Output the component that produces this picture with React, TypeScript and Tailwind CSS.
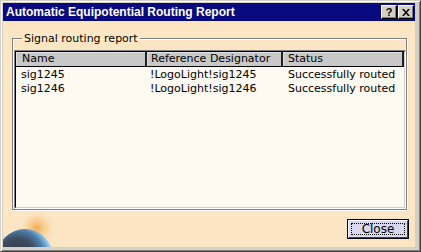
import React from "react";

const body = { fontFamily: '"DejaVu Sans", Verdana, sans-serif' };

function TitleButton({ children }: { children: React.ReactNode }) {
  return (
    <div className="w-[16px] h-[14px] bg-[#d4d0c8] border-t border-l border-white border-r border-b border-r-black border-b-black shadow-[inset_-1px_-1px_0_#808080] flex items-center justify-center">
      {children}
    </div>
  );
}

export default function App() {
  const rows = [
    ["sig1245", "!LogoLight!sig1245", "Successfully routed"],
    ["sig1246", "!LogoLight!sig1246", "Successfully routed"],
  ];
  return (
    <div
      className="w-[421px] h-[252px] bg-[#d4d0c8] border border-[#d4d0c8] border-r-[#404040] border-b-[#404040] shadow-[inset_1px_1px_0_#ffffff,inset_-1px_-1px_0_#808080] pl-[2px] pt-[2px] pr-[5px] pb-[4px] flex flex-col"
      style={body}
    >
      {/* Title bar */}
      <div className="h-[18px] bg-[#0a0a80] flex items-center justify-between pl-[3px] pr-[1px]">
        <span
          className="text-white text-[12px] font-bold leading-none"
          style={{ fontFamily: '"Liberation Sans", Arial, sans-serif' }}
        >
          Automatic Equipotential Routing Report
        </span>
        <div className="flex gap-[1px]">
          <TitleButton>
            <span
              className="text-black text-[11px] font-bold leading-none"
              style={{ fontFamily: '"Liberation Sans", Arial, sans-serif' }}
            >
              ?
            </span>
          </TitleButton>
          <TitleButton>
            <svg width="8" height="7" viewBox="0 0 8 7">
              <path d="M0 0h2l2 2.5L6 0h2L5 3.5 8 7H6L4 4.5 2 7H0l3-3.5z" fill="#000" />
            </svg>
          </TitleButton>
        </div>
      </div>

      {/* Body */}
      <div className="flex-1 bg-[#fbe5c2] relative flex flex-col">
        {/* texture dots */}
        <div className="absolute left-[3px] top-[12px] right-[3px] bottom-[31px] border border-dotted border-[#fff3e0] pointer-events-none" />
        {/* planet decoration */}
        <svg className="absolute left-0 bottom-0" width="60" height="36" viewBox="0 0 60 36">
          <defs>
            <radialGradient id="glow" cx="34" cy="17" r="18" gradientUnits="userSpaceOnUse">
              <stop offset="0" stopColor="#f2a040" stopOpacity="0.85" />
              <stop offset="0.55" stopColor="#f6c078" stopOpacity="0.45" />
              <stop offset="1" stopColor="#fbe5c2" stopOpacity="0" />
            </radialGradient>
            <radialGradient id="planet" cx="14" cy="46" r="34" gradientUnits="userSpaceOnUse">
              <stop offset="0" stopColor="#2e3440" />
              <stop offset="0.55" stopColor="#3e4c60" />
              <stop offset="0.8" stopColor="#4f7ea8" />
              <stop offset="0.95" stopColor="#7cb8e4" />
              <stop offset="1" stopColor="#a0d0f0" />
            </radialGradient>
          </defs>
          <rect x="0" y="0" width="60" height="36" fill="url(#glow)" />
          <circle cx="22" cy="46" r="28" fill="url(#planet)" />
        </svg>

        <fieldset className="relative mt-[11px] ml-[9px] mr-[8px] border border-[#808080] shadow-[inset_1px_1px_0_#ffffff,1px_1px_0_#ffffff] pl-[1px] pr-0 pt-[5px] pb-0 min-w-0">
          <legend className="ml-[8px] px-[2px] text-[11px] leading-[13px] text-black">
            Signal routing report
          </legend>
          <div className="h-[159px] border-t border-l border-[#808080] border-r border-b border-r-white border-b-white">
            <div className="h-full border-t border-l border-black border-r border-b border-r-[#d4d0c8] border-b-[#d4d0c8] bg-[#fef9f1] flex flex-col">
              <div className="grid grid-cols-[131px_136px_1fr] h-[15px] text-[11px] leading-[13px] text-black">
                <div className="bg-[#c8c8c8] border-r-2 border-b border-r-[#202020] border-b-black pl-[6px] shadow-[inset_1px_1px_0_#e0e0e0]">Name</div>
                <div className="bg-[#c8c8c8] border-r-2 border-b border-r-[#202020] border-b-black pl-[4px] shadow-[inset_1px_1px_0_#e0e0e0]">Reference Designator</div>
                <div className="bg-[#c8c8c8] border-r-2 border-b border-r-[#202020] border-b-black pl-[5px] shadow-[inset_1px_1px_0_#e0e0e0]">Status</div>
              </div>
              <div className="pt-[1px]">
                {rows.map((r) => (
                  <div key={r[0]} className="grid grid-cols-[131px_136px_1fr] h-[14px] text-[11px] leading-[14px] text-black">
                    <div className="pl-[5px]">{r[0]}</div>
                    <div className="pl-[3px]">{r[1]}</div>
                    <div className="pl-[5px]">{r[2]}</div>
                  </div>
                ))}
              </div>
            </div>
          </div>
        </fieldset>

        <div className="flex justify-end mt-[9px] pr-[6px]">
          <button className="w-[62px] h-[20px] border border-black p-0 bg-[#d4d0c8]">
            <div className="h-full border-t border-l border-white border-r border-b border-r-[#404040] border-b-[#404040] bg-[#d8d8f2] flex items-center justify-center p-[2px]">
              <div className="w-full h-full border border-dotted border-black flex items-center justify-center text-[12px] leading-none text-black">
                Close
              </div>
            </div>
          </button>
        </div>
      </div>
    </div>
  );
}
